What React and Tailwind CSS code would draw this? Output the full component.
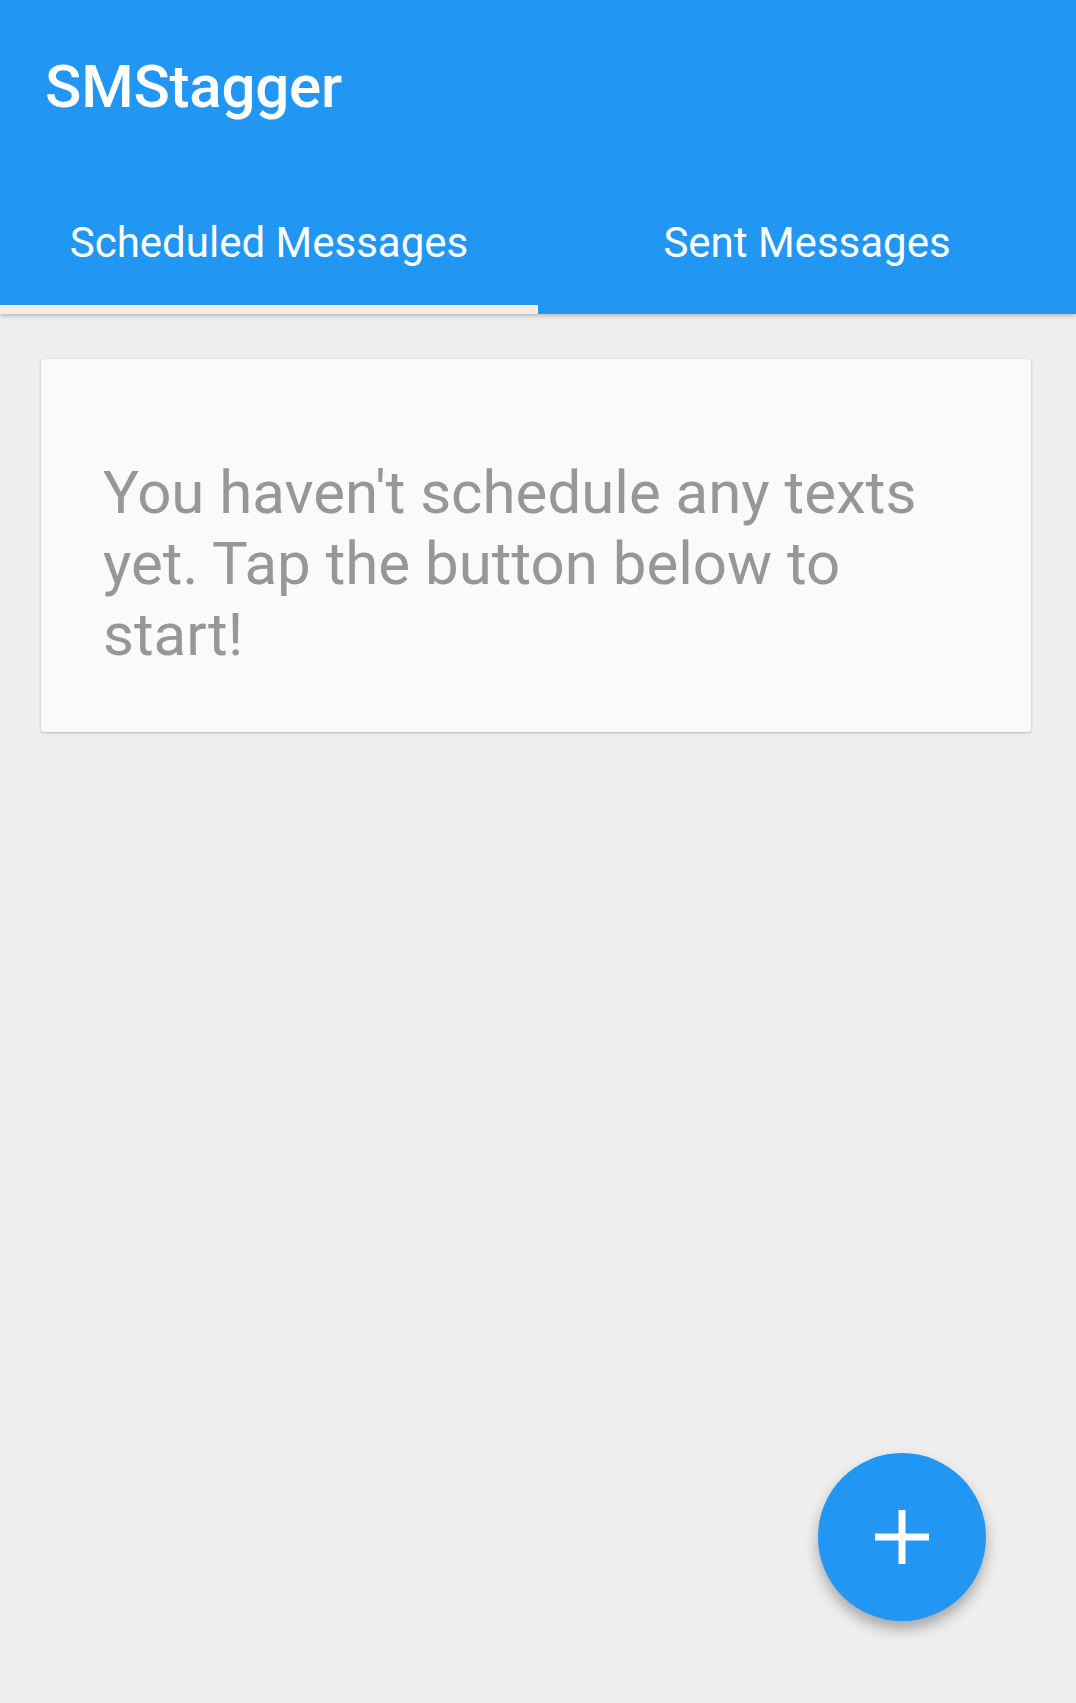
export default function App() {
    return (
        <div className="relative min-h-[1703px] bg-[#eeeeee] font-['Roboto',sans-serif] overflow-hidden">

            {/* Header */}
            <header className="bg-[#2196f3] text-white shadow-[0_2px_4px_rgba(0,0,0,0.22)] relative z-10">

                <div className="h-[170px] pt-[52px] pl-[45px]">
                    <h1 className="text-[60px] leading-[70px] font-medium tracking-[-0.2px]">
                        SMStagger
                    </h1>
                </div>

                <div className="flex h-[144px]">
                    <Tab label="Scheduled Messages" active />
                    <Tab label="Sent Messages" />
                </div>
            </header>

            {/* Empty state */}
            <main className="pt-[45px]">
                <div className="ml-[41px] w-[990px] bg-[#fafafa] rounded-[4px] shadow-[0_1px_3px_rgba(0,0,0,0.22)] pt-[98px] pb-[62px] px-[62px]">
                    <p className="text-[60px] leading-[71px] text-[#979797]">
                        You haven't schedule any texts yet. Tap the button below to start!
                    </p>
                </div>
            </main>

            {/* FAB */}
            <button className="absolute left-[818px] top-[1453px] w-[168px] h-[168px] rounded-full bg-[#2196f3] flex items-center justify-center shadow-[0_8px_14px_rgba(0,0,0,0.3)]">
                <svg width="54" height="54" viewBox="0 0 54 54" className="text-white">
                    <path d="M27 0V54M0 27H54" stroke="currentColor" strokeWidth="7" fill="none" />
                </svg>
            </button>
        </div>
    )
}

function Tab({ label, active }) {
    return (
        <div className={`w-1/2 flex justify-center pt-[48px] ${active ? 'border-b-[9px] border-[#eeeeee]' : ''}`}>
            <span className="text-[42px] leading-[50px] text-white">
                {label}
            </span>
        </div>
    )
}
